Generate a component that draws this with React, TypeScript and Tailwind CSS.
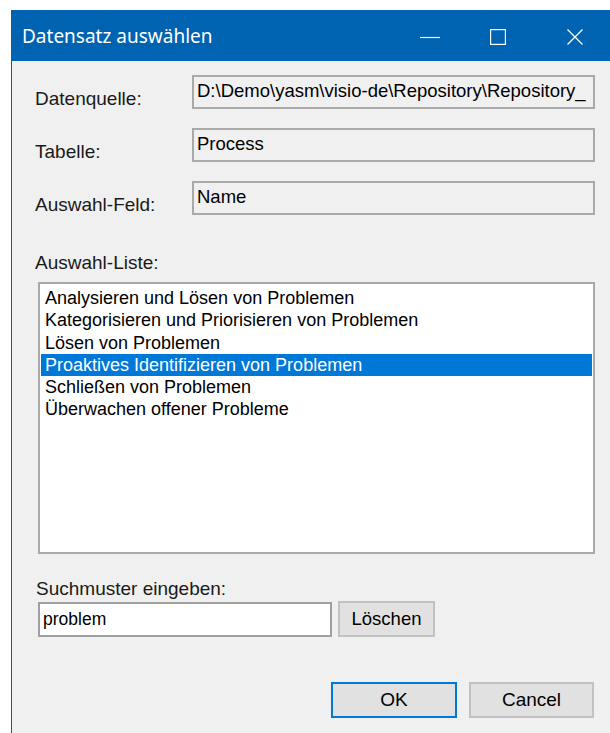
import React, { useState } from 'react'

const items = [
  'Analysieren und Lösen von Problemen',
  'Kategorisieren und Priorisieren von Problemen',
  'Lösen von Problemen',
  'Proaktives Identifizieren von Problemen',
  'Schließen von Problemen',
  'Überwachen offener Probleme',
]

const sans = { fontFamily: '"Liberation Sans", Arial, sans-serif' }

const ReadOnlyField = ({ label, value }: { label: string, value: string }) => (
  <div className="flex items-start">
    <div className="w-[157px] shrink-0 pt-[15px] text-[19px] leading-[18px] text-[#1a1a1a]">{label}</div>
    <div className="flex-1 h-[34px] border-2 border-[#a9a9a9] bg-[#f0f0f0] pl-[3px] pt-[5px] text-[18.5px] leading-[18px] text-black whitespace-nowrap overflow-hidden">
      {value}
    </div>
  </div>
)

const App = () => {
  const [selected, setSelected] = useState(3)
  const [pattern, setPattern] = useState('problem')

  return (
    <div className="w-[610px] h-[733px] bg-white pt-[10px] pl-[11px] flex">
      <div className="flex-1 flex flex-col border-l border-[#0063b1]">
        {/* Title bar */}
        <div className="h-[51px] bg-[#0063b1] flex items-center text-white shrink-0">
          <span className="ml-[10px] text-[19px] mt-[1px]" style={{ fontFamily: '"Noto Sans", "Open Sans", sans-serif' }}>
            Datensatz auswählen
          </span>
          <div className="ml-auto mr-[27px] mt-[3px] flex items-center">
            <svg width="20" height="16" viewBox="0 0 20 16">
              <path d="M0 8.5h20" stroke="white" strokeWidth="1.2" />
            </svg>
            <svg className="ml-[50px]" width="16" height="16" viewBox="0 0 16 16">
              <rect x="0.6" y="0.6" width="14.8" height="14.8" fill="none" stroke="white" strokeWidth="1.2" />
            </svg>
            <svg className="ml-[61px]" width="16" height="16" viewBox="0 0 16 16">
              <path d="M0.5 0.5L15.5 15.5M15.5 0.5L0.5 15.5" stroke="white" strokeWidth="1.3" />
            </svg>
          </div>
        </div>

        {/* Dialog body */}
        <div className="flex-1 bg-[#f0f0f0] pl-[23px] pr-[15px] pt-[14px] flex flex-col" style={sans}>
          <div className="flex flex-col gap-[19px]">
            <ReadOnlyField label="Datenquelle:" value={'D:\\Demo\\yasm\\visio-de\\Repository\\Repository_'} />
            <ReadOnlyField label="Tabelle:" value="Process" />
            <ReadOnlyField label="Auswahl-Feld:" value="Name" />
          </div>

          <div className="mt-[39px] text-[19px] leading-[18px] text-[#1a1a1a]">Auswahl-Liste:</div>
          <div className="mt-[10px] ml-[3px] h-[272px] border-2 border-[#a9a9a9] bg-white pt-[3px] px-[1px]">
            {items.map((item, i) => (
              <div
                key={item}
                onClick={() => setSelected(i)}
                className={`h-[22.3px] leading-[22px] pl-[4px] text-[18px] whitespace-nowrap cursor-default ${i === selected ? 'bg-[#0078d7] text-white' : 'text-black'}`}
              >
                {item}
              </div>
            ))}
          </div>

          <div className="mt-[26px] ml-[1px] text-[19px] leading-[18px] text-[#1a1a1a]">Suchmuster eingeben:</div>
          <div className="mt-[3px] ml-[3px] flex items-center gap-[6px]">
            <input
              value={pattern}
              onChange={(e) => setPattern(e.target.value)}
              className="w-[294px] h-[35px] border-2 border-[#a0a0a0] bg-white px-[3px] text-[17.5px] text-black outline-none"
              style={sans}
            />
            <button className="w-[97px] h-[36px] border-2 border-[#c2c2c2] bg-[#e1e1e1] text-[18.5px] text-black" style={sans}>
              Löschen
            </button>
          </div>

          <div className="mt-[45px] flex justify-end gap-[12px] pr-[1px]">
            <button className="w-[126px] h-[36px] border-2 border-[#0078d7] bg-[#e1e1e1] text-[19px] text-black" style={sans}>
              OK
            </button>
            <button className="w-[125px] h-[36px] border-2 border-[#c2c2c2] bg-[#e1e1e1] text-[19px] text-black" style={sans}>
              Cancel
            </button>
          </div>
        </div>
      </div>
    </div>
  )
}

export default App
